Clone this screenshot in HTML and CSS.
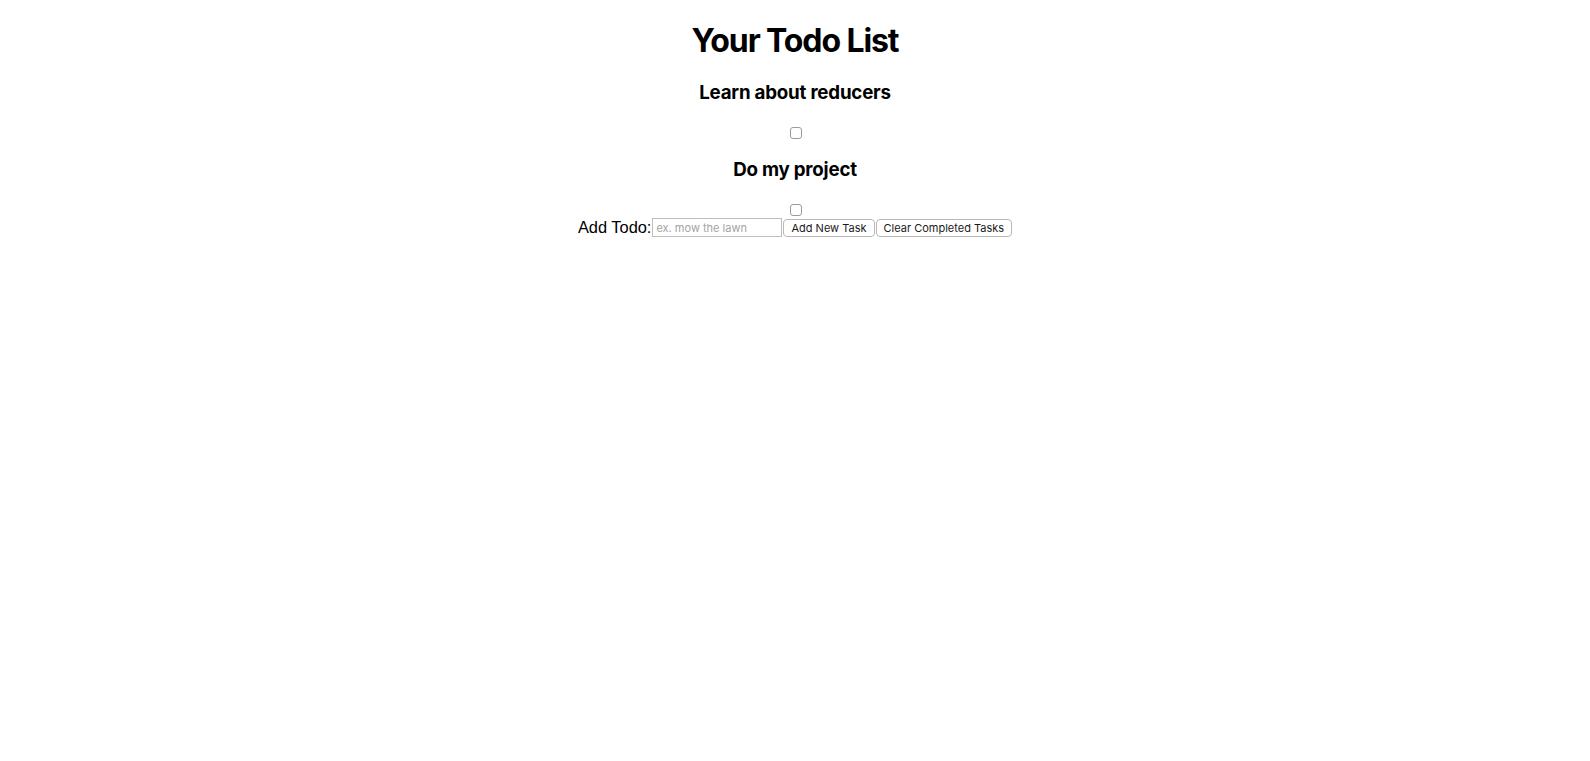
FILE: index.html
```html
<!DOCTYPE html>
<html lang="en">
<head>
<meta charset="utf-8">
<title>Todo List</title>
<link rel="stylesheet" href="styles.css">
</head>
<body>
<div class="app">
  <h1 class="title">Your Todo List</h1>
  <div class="todo-list">
    <div class="todo">
      <h3 class="todo-name">Learn about reducers</h3>
      <input type="checkbox" class="todo-check">
    </div>
    <div class="todo">
      <h3 class="todo-name">Do my project</h3>
      <input type="checkbox" class="todo-check">
    </div>
  </div>
  <form class="todo-form">
    <label class="form-label" for="task">Add Todo:</label>
    <input id="task" class="todo-input" type="text" placeholder="ex. mow the lawn">
    <button type="button" class="btn btn-add">Add New Task</button>
    <button type="button" class="btn btn-clear">Clear Completed Tasks</button>
  </form>
</div>
</body>
</html>
```

FILE: styles.css
```css
html, body {
  margin: 0;
  padding: 0;
  background: #ffffff;
}

body {
  font-family: Inter, "Liberation Sans", sans-serif;
  color: #000000;
}

.app {
  display: flex;
  flex-direction: column;
  align-items: center;
}

.title {
  margin: 21px 0 0;
  font-size: 32px;
  line-height: 39px;
  font-weight: 700;
  letter-spacing: -1.1px;
}

.todo-list {
  display: flex;
  flex-direction: column;
  align-items: center;
  padding-top: 21px;
}

.todo {
  display: flex;
  flex-direction: column;
  align-items: center;
  margin-bottom: 19px;
}

.todo:last-child {
  margin-bottom: 0;
}

.todo-name {
  margin: 0;
  font-size: 18.72px;
  line-height: 23px;
  font-weight: 700;
  letter-spacing: -0.2px;
}

.todo-check {
  appearance: none;
  -webkit-appearance: none;
  width: 12px;
  height: 12px;
  margin: 23px 0 0 2px;
  border: 1px solid #9a9a9a;
  border-radius: 3px;
  background: #ffffff;
  box-sizing: border-box;
}

.todo-form {
  display: flex;
  align-items: center;
  height: 19px;
  margin-top: 2px;
}

.form-label {
  font-family: "Liberation Sans", Arial, sans-serif;
  font-size: 16.4px;
  line-height: 18px;
  margin: 0 1px 2px 0;
}

.todo-input {
  width: 130px;
  height: 19px;
  box-sizing: border-box;
  border: 1px solid #bdbdbd;
  padding: 0 3px;
  margin: 0;
  font-family: Inter, "Liberation Sans", sans-serif;
  font-size: 11px;
  color: #000;
  background: #fff;
  border-radius: 0;
  outline: none;
}

.todo-input::placeholder {
  color: #a3a3a3;
}

.btn {
  height: 18px;
  box-sizing: border-box;
  padding: 0 7px;
  border: 1px solid #b8b8b8;
  border-radius: 4px;
  background: #ffffff;
  font-family: Inter, "Liberation Sans", sans-serif;
  font-size: 11px;
  line-height: 16px;
  color: #1a1a1a;
  margin: 0;
}

.btn-add {
  margin-left: 1px;
}

.btn-clear {
  margin-left: 1px;
}
```
